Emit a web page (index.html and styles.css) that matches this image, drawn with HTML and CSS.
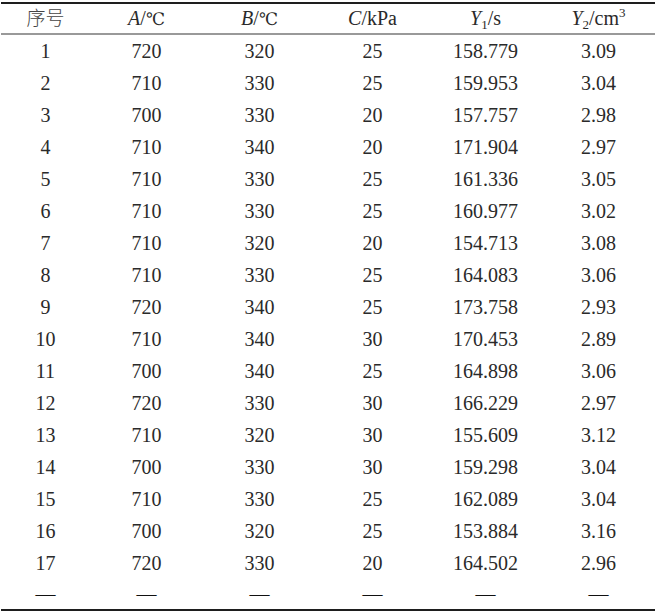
FILE: index.html
```html
<!DOCTYPE html>
<html lang="zh">
<head>
<meta charset="utf-8">
<title>表</title>
<link rel="stylesheet" href="styles.css">
</head>
<body>
<table class="data">
  <colgroup>
    <col class="c-first">
    <col class="c-rest"><col class="c-rest"><col class="c-rest"><col class="c-rest"><col class="c-rest">
  </colgroup>
  <thead>
    <tr>
      <th><span class="cjk">序号</span></th>
      <th><i>A</i>/<span class="deg">℃</span></th>
      <th><i>B</i>/<span class="deg">℃</span></th>
      <th><i>C</i>/kPa</th>
      <th><i>Y</i><span class="sub">1</span>/s</th>
      <th><i>Y</i><span class="sub">2</span>/cm<span class="sup">3</span></th>
    </tr>
  </thead>
  <tbody>
    <tr><td>1</td><td>720</td><td>320</td><td>25</td><td>158.779</td><td>3.09</td></tr>
    <tr><td>2</td><td>710</td><td>330</td><td>25</td><td>159.953</td><td>3.04</td></tr>
    <tr><td>3</td><td>700</td><td>330</td><td>20</td><td>157.757</td><td>2.98</td></tr>
    <tr><td>4</td><td>710</td><td>340</td><td>20</td><td>171.904</td><td>2.97</td></tr>
    <tr><td>5</td><td>710</td><td>330</td><td>25</td><td>161.336</td><td>3.05</td></tr>
    <tr><td>6</td><td>710</td><td>330</td><td>25</td><td>160.977</td><td>3.02</td></tr>
    <tr><td>7</td><td>710</td><td>320</td><td>20</td><td>154.713</td><td>3.08</td></tr>
    <tr><td>8</td><td>710</td><td>330</td><td>25</td><td>164.083</td><td>3.06</td></tr>
    <tr><td>9</td><td>720</td><td>340</td><td>25</td><td>173.758</td><td>2.93</td></tr>
    <tr><td>10</td><td>710</td><td>340</td><td>30</td><td>170.453</td><td>2.89</td></tr>
    <tr><td>11</td><td>700</td><td>340</td><td>25</td><td>164.898</td><td>3.06</td></tr>
    <tr><td>12</td><td>720</td><td>330</td><td>30</td><td>166.229</td><td>2.97</td></tr>
    <tr><td>13</td><td>710</td><td>320</td><td>30</td><td>155.609</td><td>3.12</td></tr>
    <tr><td>14</td><td>700</td><td>330</td><td>30</td><td>159.298</td><td>3.04</td></tr>
    <tr><td>15</td><td>710</td><td>330</td><td>25</td><td>162.089</td><td>3.04</td></tr>
    <tr><td>16</td><td>700</td><td>320</td><td>25</td><td>153.884</td><td>3.16</td></tr>
    <tr><td>17</td><td>720</td><td>330</td><td>20</td><td>164.502</td><td>2.96</td></tr>
    <tr class="last"><td>—</td><td>—</td><td>—</td><td>—</td><td>—</td><td>—</td></tr>
  </tbody>
</table>
</body>
</html>
```
FILE: styles.css
```css
html, body {
  margin: 0;
  padding: 0;
  background: #ffffff;
}
body {
  padding: 2px 0 0 1px;
  font-family: "Liberation Serif", "Times New Roman", "DejaVu Serif", serif;
  font-size: 20px;
  color: #2a2a2a;
}
.data {
  border-collapse: separate;
  border-spacing: 0;
  width: 654px;
  table-layout: fixed;
  border-top: 2px solid #1e1e1e;
}
.c-first { width: 89px; }
.c-rest { width: 113px; }
.data th,
.data td {
  padding: 0;
  text-align: center;
  font-weight: normal;
  white-space: nowrap;
}
.data th {
  line-height: 29px;
  height: 29px;
  border-bottom: 2px solid #999999;
}
.data td {
  line-height: 32px;
  height: 32px;
}
.data tr.last td {
  line-height: 30px;
  height: 30px;
  border-bottom: 2px solid #1e1e1e;
  color: #111;
}
.cjk {
  font-family: "Noto Sans CJK SC", sans-serif;
  font-size: 19px;
  line-height: 1;
  color: #444;
  font-weight: 300;
}
.deg {
  font-family: "DejaVu Serif", serif;
  font-size: 17px;
  line-height: 1;
}
.sub {
  font-size: 13px;
  line-height: 1;
  vertical-align: -4px;
}
.sup {
  font-size: 13px;
  line-height: 1;
  vertical-align: 8px;
}
```
